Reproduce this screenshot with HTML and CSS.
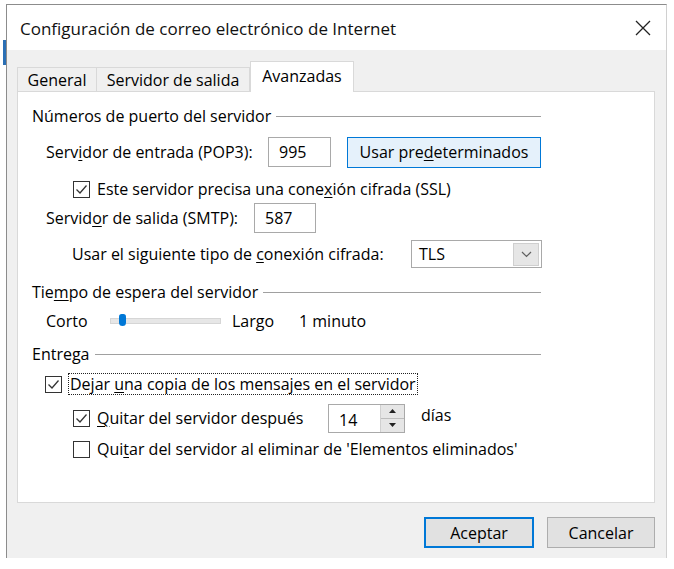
FILE: index.html
```html
<!DOCTYPE html>
<html lang="es">
<head>
<meta charset="utf-8">
<title>Configuración de correo electrónico de Internet</title>
<link rel="stylesheet" href="styles.css">
</head>
<body>
<div class="behind"></div>
<div class="dialog">
  <div class="titlebar">
    <span class="title">Configuración de correo electrónico de Internet</span>
    <svg class="close" width="16" height="16" viewBox="0 0 16 16"><path d="M1 1L15 15M15 1L1 15" stroke="#222" stroke-width="1.3" fill="none"/></svg>
  </div>
  <div class="client">
    <div class="tabs">
      <div class="tab t-general">General</div>
      <div class="tab t-salida">Servidor de salida</div>
      <div class="tab active">Avanzadas</div>
    </div>
    <div class="panel">
      <div class="group g1"><span>Números de puerto del servidor</span><i class="rule"></i></div>

      <div class="row r-pop">
        <span class="lbl w-pop">Serv<u>i</u>dor de entrada (POP3):</span>
        <span class="field f-pop">995</span>
        <span class="btn-def">Usar pre<u>d</u>eterminados</span>
      </div>

      <div class="row r-ssl ind2">
        <span class="cb"><svg width="17" height="17" viewBox="0 0 17 17"><rect x="0.5" y="0.5" width="16" height="16" fill="#fff" stroke="#333"/><path d="M3.5 8.5L7 12L13.5 4.5" stroke="#333" stroke-width="1.3" fill="none"/></svg></span>
        <span>Este servidor precisa una cone<u>x</u>ión cifrada (SSL)</span>
      </div>

      <div class="row r-smtp">
        <span class="lbl w-smtp">Servid<u>o</u>r de salida (SMTP):</span>
        <span class="field f-smtp">587</span>
      </div>

      <div class="row r-tls">
        <span class="lbl w-tls">Usar el siguiente tipo de <u>c</u>onexión cifrada:</span>
        <span class="combo"><span class="combo-text">TLS</span><span class="combo-btn"><svg width="11" height="7" viewBox="0 0 11 7"><path d="M1 1L5.5 5.5L10 1" stroke="#606060" stroke-width="1.2" fill="none"/></svg></span></span>
      </div>

      <div class="group g2"><span>Tie<u>m</u>po de espera del servidor</span><i class="rule"></i></div>

      <div class="row r-slider">
        <span class="lbl w-corto">Corto</span>
        <span class="track"><span class="thumb"></span></span>
        <span class="lbl w-largo">Largo</span>
        <span>1 minuto</span>
      </div>

      <div class="group g3"><span>Entrega</span><i class="rule"></i></div>

      <div class="row r-dejar">
        <span class="cb"><svg width="17" height="17" viewBox="0 0 17 17"><rect x="0.5" y="0.5" width="16" height="16" fill="#fff" stroke="#333"/><path d="M3.5 8.5L7 12L13.5 4.5" stroke="#333" stroke-width="1.3" fill="none"/></svg></span>
        <span class="focus">Dejar <u>u</u>na copia de los mensajes en el servidor</span>
      </div>

      <div class="row r-quitar1 ind2">
        <span class="cb"><svg width="17" height="17" viewBox="0 0 17 17"><rect x="0.5" y="0.5" width="16" height="16" fill="#fff" stroke="#333"/><path d="M3.5 8.5L7 12L13.5 4.5" stroke="#333" stroke-width="1.3" fill="none"/></svg></span>
        <span class="lbl w-quitar"><u>Q</u>uitar del servidor después</span>
        <span class="spin"><span class="spin-text">14</span><span class="spin-btns"><span class="spin-up"><svg width="7" height="4" viewBox="0 0 7 4"><path d="M0 4L3.5 0L7 4Z" fill="#222"/></svg></span><span class="spin-down"><svg width="7" height="4" viewBox="0 0 7 4"><path d="M0 0L3.5 4L7 0Z" fill="#222"/></svg></span></span></span>
        <span class="dias">días</span>
      </div>

      <div class="row r-quitar2 ind2">
        <span class="cb"><svg width="17" height="17" viewBox="0 0 17 17"><rect x="0.5" y="0.5" width="16" height="16" fill="#fff" stroke="#333"/></svg></span>
        <span>Qui<u>t</u>ar del servidor al eliminar de 'Elementos eliminados'</span>
      </div>
    </div>
    <div class="footer">
      <span class="btn btn-default">Aceptar</span>
      <span class="btn">Cancelar</span>
    </div>
  </div>
</div>
</body>
</html>
```

FILE: styles.css
```css
html, body {
  margin: 0;
  padding: 0;
  background: #ffffff;
}
body {
  width: 674px;
  height: 569px;
  overflow: hidden;
  position: relative;
  font-family: "Open Sans", "Noto Sans", sans-serif;
  font-size: 16px;
  color: #000;
}
u {
  text-decoration: underline;
  text-underline-offset: 2px;
  text-decoration-thickness: 1px;
}
.behind {
  position: absolute;
  left: 3px;
  top: 40px;
  width: 3px;
  height: 25px;
  background: #2a6fb5;
}
.dialog {
  margin: 4px 0 0 6px;
  width: 661px;
  height: 554px;
  box-sizing: border-box;
  border-top: 1px solid #8c8c8c;
  border-left: 1px solid #8c8c8c;
  border-right: 1px solid #d0d0d0;
  display: flex;
  flex-direction: column;
}
.titlebar {
  height: 45px;
  background: #fff;
  display: flex;
  align-items: center;
  padding: 0 0 0 13px;
  flex-shrink: 0;
}
.title {
  font-size: 17px;
  flex: 1;
  padding-top: 1px;
  color: #111;
}
.close {
  margin-right: 15px;
}
.client {
  flex: 1;
  background: #f0f0f0;
  padding: 12px 11px 0 10px;
  display: flex;
  flex-direction: column;
}
.tabs {
  display: flex;
  align-items: flex-end;
  height: 30px;
  position: relative;
  z-index: 1;
  margin-bottom: -1px;
}
.tab {
  height: 24px;
  box-sizing: border-box;
  border: 1px solid #d9d9d9;
  border-bottom: none;
  background: #f0f0f0;
  display: flex;
  align-items: center;
  justify-content: center;
  margin-bottom: 1px;
  white-space: nowrap;
}
.t-general { width: 80px; }
.t-salida { width: 153px; border-left: none; }
.tab.active {
  width: 104px;
  height: 31px;
  margin-bottom: 0;
  background: #fff;
  padding-bottom: 3px;
}
.panel {
  height: 412px;
  box-sizing: border-box;
  background: #fff;
  border: 1px solid #d9d9d9;
  padding: 0 0 0 14px;
  display: flex;
  flex-direction: column;
}
.group {
  display: flex;
  align-items: center;
  width: 509px;
  height: 24px;
}
.group .rule {
  flex: 1;
  height: 1px;
  background: #a0a0a0;
  margin-left: 5px;
}
.g1 { margin-top: 12px; }
.g2 { margin-top: 12px; }
.g3 { margin-top: 9px; }
.row {
  display: flex;
  align-items: center;
  padding-left: 14px;
  white-space: nowrap;
}
.ind2 { padding-left: 41px; }
.lbl { display: inline-block; flex-shrink: 0; }
.r-pop { height: 30px; margin-top: 9px; }
.r-ssl { height: 22px; margin-top: 11px; }
.r-smtp { height: 30px; margin-top: 3px; }
.r-tls { height: 28px; margin-top: 7px; padding-left: 40px; }
.r-slider { height: 24px; margin-top: 5px; }
.r-dejar { height: 22px; margin-top: 7px; padding-left: 13px; }
.r-quitar1 { height: 30px; margin-top: 8px; }
.r-quitar2 { height: 22px; margin-top: 5px; }

.w-pop { width: 222px; }
.w-smtp { width: 208px; }
.w-tls { width: 339px; }
.w-corto { width: 64px; }
.w-largo { width: 67px; margin-left: 11px; }
.w-quitar { width: 231px; }

.field {
  box-sizing: border-box;
  height: 30px;
  border: 1px solid #a9a9a9;
  display: flex;
  align-items: center;
  padding-left: 10px;
  background: #fff;
  flex-shrink: 0;
}
.f-pop { width: 63px; }
.f-smtp { width: 62px; }
.btn-def {
  box-sizing: border-box;
  width: 194px;
  height: 31px;
  margin-left: 16px;
  background: #e5f1fb;
  border: 1px solid #0078d7;
  display: flex;
  align-items: center;
  justify-content: center;
  flex-shrink: 0;
}
.cb {
  width: 17px;
  height: 17px;
  display: flex;
  margin-right: 7px;
  flex-shrink: 0;
}
.combo {
  box-sizing: border-box;
  width: 131px;
  height: 28px;
  border: 1px solid #a9a9a9;
  display: flex;
  align-items: center;
  padding: 0 2px 0 7px;
  flex-shrink: 0;
}
.combo-text { flex: 1; }
.combo-btn {
  width: 26px;
  height: 23px;
  box-sizing: border-box;
  background: #e6e6e6;
  border: 1px solid #cfcfcf;
  display: flex;
  align-items: center;
  justify-content: center;
}
.track {
  position: relative;
  width: 111px;
  height: 6px;
  box-sizing: border-box;
  background: #e7e7e7;
  border: 1px solid #d6d6d6;
  flex-shrink: 0;
}
.thumb {
  position: absolute;
  left: 8px;
  top: -5px;
  width: 7px;
  height: 12px;
  background: #0078d7;
  border-radius: 3px 3px 4px 4px;
}
.focus {
  outline: 1px dotted #222;
  outline-offset: 0;
  padding: 0 1px;
  line-height: 20px;
}
.spin {
  box-sizing: border-box;
  width: 77px;
  height: 29px;
  border: 1px solid #a9a9a9;
  display: flex;
  align-items: center;
  padding-left: 10px;
  background: #fff;
  flex-shrink: 0;
}
.spin-text { flex: 1; padding-top: 3px; }
.spin-btns {
  width: 23px;
  height: 27px;
  display: flex;
  flex-direction: column;
  background: #e6e6e6;
  border-left: 1px solid #d0d0d0;
}
.spin-up, .spin-down {
  flex: 1;
  display: flex;
  align-items: center;
  justify-content: center;
}
.spin-up { border-bottom: 1px solid #bdbdbd; }
.dias { margin-left: 16px; margin-top: -6px; }
.footer {
  display: flex;
  justify-content: flex-end;
  gap: 13px;
  margin-top: 14px;
}
.btn {
  box-sizing: border-box;
  width: 108px;
  height: 31px;
  background: #e1e1e1;
  border: 1px solid #adadad;
  display: flex;
  align-items: center;
  justify-content: center;
}
.btn-default {
  width: 110px;
  border: 2px solid #0078d7;
}
```
